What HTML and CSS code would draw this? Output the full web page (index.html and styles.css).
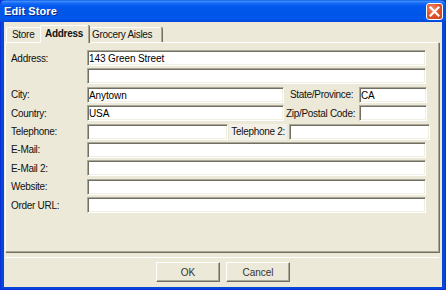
FILE: index.html
```html
<!DOCTYPE html>
<html>
<head>
<meta charset="utf-8">
<link rel="stylesheet" href="styles.css">
</head>
<body>
<div class="window">
  <div class="titlebar">
    <span class="title">Edit Store</span>
    <div class="close">
      <svg width="11" height="11" viewBox="0 0 11 11"><path d="M1.5 1.5 L9.5 9.5 M9.5 1.5 L1.5 9.5" stroke="#fff" stroke-width="2.2" stroke-linecap="square" fill="none"/></svg>
    </div>
  </div>
  <div class="client">
    <div class="tabs">
      <div class="tab tab-store">Store</div>
      <div class="tab tab-active">Address</div>
      <div class="tab tab-aisles">Grocery Aisles</div>
    </div>
    <div class="panel">
      <div class="row">
        <span class="lbl">Address:</span>
        <input class="field w-full" value="143 Green Street">
      </div>
      <div class="row">
        <span class="lbl"></span>
        <input class="field w-full" value="">
      </div>
      <div class="row">
        <span class="lbl">City:</span>
        <input class="field w-mid" value="Anytown">
        <span class="lbl2 lbl-state">State/Province:</span>
        <input class="field w-small" value="CA">
      </div>
      <div class="row">
        <span class="lbl">Country:</span>
        <input class="field w-mid" value="USA">
        <span class="lbl2 lbl-zip">Zip/Postal Code:</span>
        <input class="field w-small" value="">
      </div>
      <div class="row">
        <span class="lbl">Telephone:</span>
        <input class="field w-tel" value="">
        <span class="lbl-tel2">Telephone 2:</span>
        <input class="field w-tel" value="">
      </div>
      <div class="row">
        <span class="lbl">E-Mail:</span>
        <input class="field w-full" value="">
      </div>
      <div class="row">
        <span class="lbl">E-Mail 2:</span>
        <input class="field w-full" value="">
      </div>
      <div class="row">
        <span class="lbl">Website:</span>
        <input class="field w-full" value="">
      </div>
      <div class="row">
        <span class="lbl">Order URL:</span>
        <input class="field w-full" value="">
      </div>
    </div>
    <div class="sep"></div>
    <div class="buttons">
      <button class="btn btn-ok">OK</button>
      <button class="btn btn-cancel">Cancel</button>
    </div>
  </div>
</div>
</body>
</html>
```
FILE: styles.css
```css
* { box-sizing: border-box; }
html, body { margin: 0; padding: 0; }
body {
  width: 446px;
  height: 290px;
  overflow: hidden;
  font-family: "Liberation Sans", Arial, sans-serif;
  font-size: 10px;
  letter-spacing: -0.3px;
  color: #111;
}
.window {
  width: 446px;
  height: 290px;
  display: flex;
  flex-direction: column;
  background: #0846d8;
  border-left: 1px solid #0831d9;
  border-right: 1px solid #0831d9;
  border-bottom: 1px solid #0831d9;
}
.titlebar {
  height: 22px;
  flex: none;
  display: flex;
  align-items: center;
  justify-content: space-between;
  padding: 0 3px 0 4px;
  margin: 0 -1px;
  background: linear-gradient(to bottom, #0a5ae8 0%, #3d8ffd 6%, #1a6af6 14%, #0058ee 30%, #0055e5 60%, #0058ee 85%, #0048d8 100%);
  border-radius: 6px 6px 0 0;
}
.title {
  color: #fff;
  font-weight: bold;
  font-size: 11px;
  text-shadow: 1px 1px 0 #0a2a8a;
  letter-spacing: 0.1px;
}
.close {
  width: 17px;
  height: 17px;
  margin-top: 1px;
  border: 1px solid #fff;
  border-radius: 3px;
  background: radial-gradient(circle at 35% 30%, #f08a6a 0%, #e0552e 45%, #c8401c 100%);
  display: flex;
  align-items: center;
  justify-content: center;
}
.close svg { display: block; }
.client {
  flex: 1;
  margin: 0 3px 2px 3px;
  background: #ece9d8;
  display: flex;
  flex-direction: column;
  padding: 3px 0 0 1px;
}
.tabs {
  display: flex;
  align-items: flex-end;
  height: 18px;
  padding-left: 1px;
  position: relative;
  z-index: 2;
  margin-bottom: -1px;
}
.tab {
  height: 15px;
  border-top: 1px solid #fff;
  border-left: 1px solid #fff;
  border-right: 1px solid #aca899;
  box-shadow: 1px 0 0 #716f64;
  border-radius: 2px 2px 0 0;
  background: #ece9d8;
  padding: 1px 0 0 5px;
  white-space: nowrap;
}
.tab-store { width: 36px; margin-bottom: 1px; }
.tab-aisles { width: 75px; padding-left: 4px; margin-bottom: 1px; }
.tab-active {
  width: 49px;
  height: 18px;
  margin: 0 -2px;
  position: relative;
  z-index: 3;
  font-weight: bold;
  padding: 2px 0 0 4px;
}
.panel {
  width: 434px;
  height: 210px;
  border-top: 1px solid #fff;
  border-left: 1px solid #fff;
  border-right: 1px solid #aca899;
  border-bottom: 1px solid #aca899;
  box-shadow: 1px 1px 0 #716f64;
  padding: 7px 0 0 5px;
  display: flex;
  flex-direction: column;
  gap: 2.4px;
  position: relative;
  z-index: 1;
}
.row {
  height: 16px;
  display: flex;
  align-items: center;
  white-space: nowrap;
}
.lbl {
  width: 76px;
  flex: none;
}
.lbl2 { flex: none; }
.lbl-state { margin-left: 6px; width: 69px; }
.lbl-zip { margin-left: 2px; width: 73px; }
.lbl-tel2 {
  flex: none;
  width: 58px;
  height: 16px;
  margin: 0 2px 0 1px;
  background: #f3f1e7;
  display: flex;
  align-items: center;
  justify-content: flex-end;
  padding-right: 2px;
}
.field {
  height: 16px;
  flex: none;
  margin: 0;
  border: 1px solid;
  border-color: #aca899 #fff #fff #aca899;
  box-shadow: inset 1px 1px 0 #716f64, inset -1px -1px 0 #f1efe2;
  background: #fff;
  font-family: "Liberation Sans", Arial, sans-serif;
  font-size: 10px;
  letter-spacing: -0.1px;
  color: #000;
  padding: 1px 0 0 1px;
  outline: none;
}
.w-full { width: 339px; }
.w-mid { width: 197px; }
.w-small { width: 68px; }
.w-tel { width: 141px; }
.sep {
  width: 434px;
  height: 2px;
  margin-top: 4px;
  border-bottom: 1px solid #fff;
}
.buttons {
  display: flex;
  justify-content: center;
  gap: 6px;
  margin-top: 4px;
  padding-right: 1px;
}
.btn {
  width: 64px;
  height: 20px;
  background: #ece9d8;
  border: 1px solid;
  border-color: #fff #716f64 #716f64 #fff;
  box-shadow: inset -1px -1px 0 #aca899;
  font-family: "Liberation Sans", Arial, sans-serif;
  font-size: 10px;
  color: #333;
  padding: 0;
}
```
